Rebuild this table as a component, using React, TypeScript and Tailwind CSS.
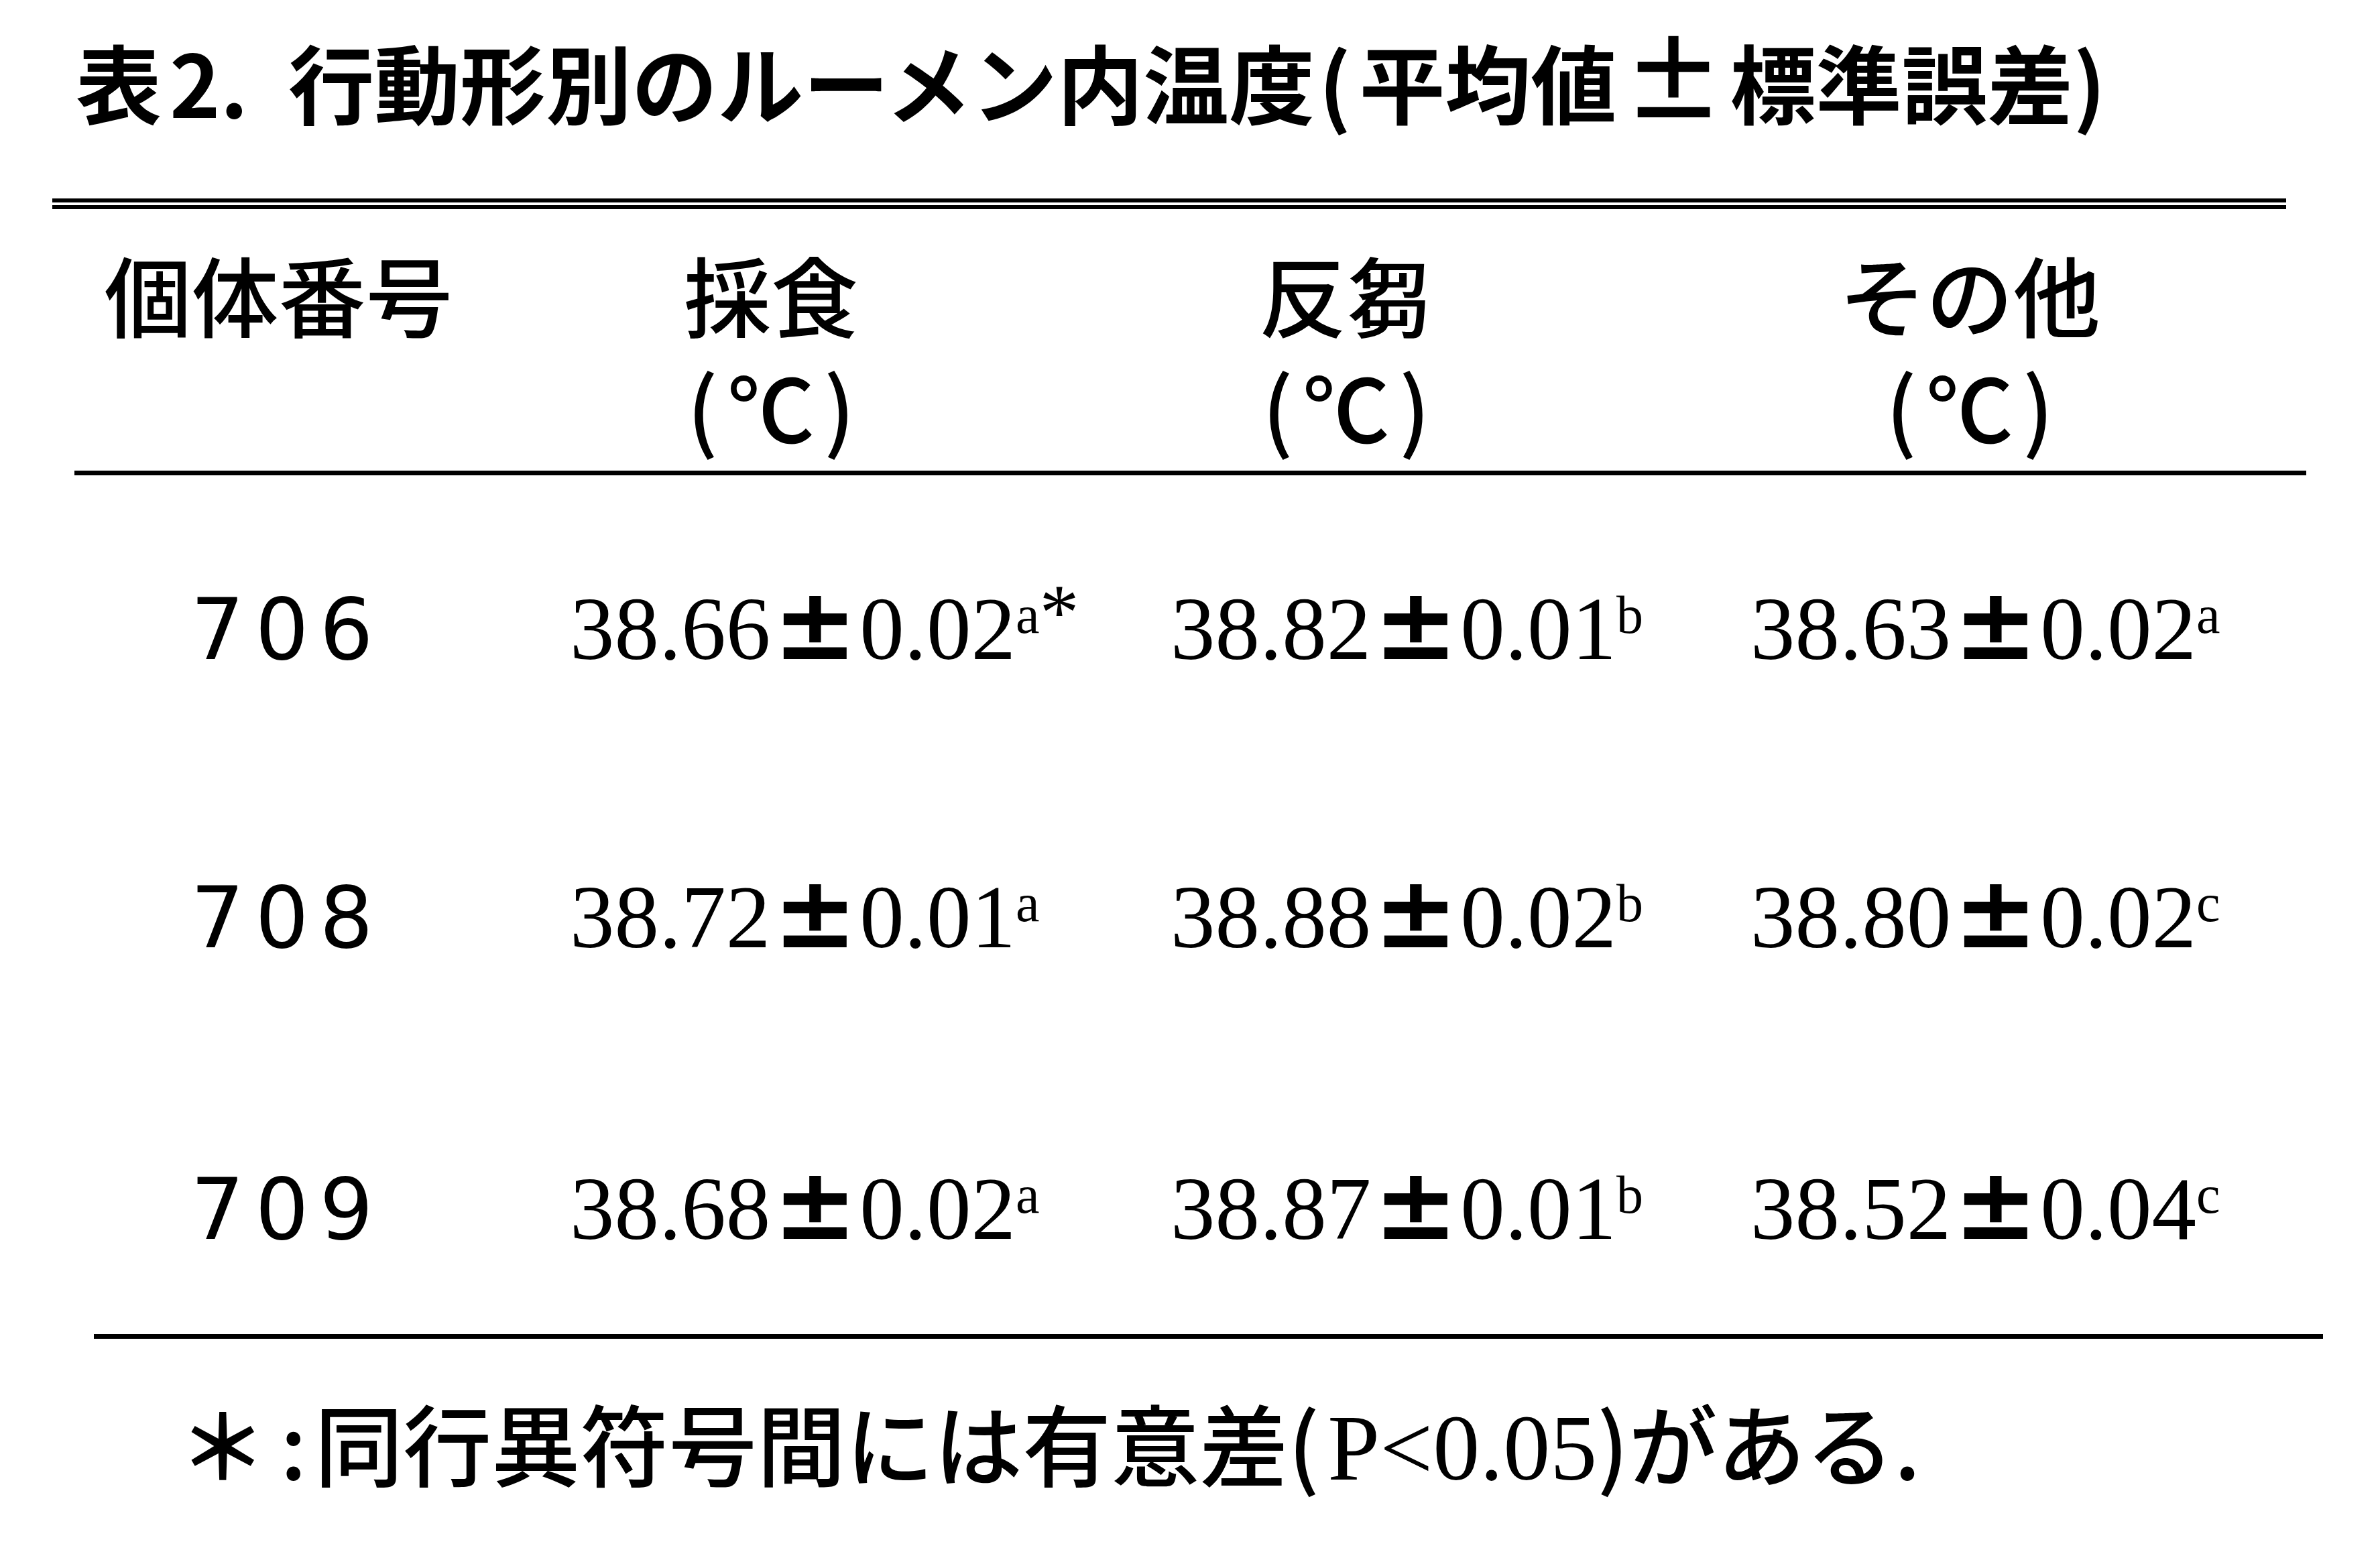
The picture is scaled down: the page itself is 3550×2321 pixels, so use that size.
const jp = "font-['Noto_Sans_CJK_JP',sans-serif]";
const serif = "font-['Liberation_Serif','Times_New_Roman',serif]";

interface Cell {
  mean: string;
  se: string;
  sup: string;
  star?: boolean;
}

interface Row {
  id: string;
  cells: Cell[];
  gap: string;
}

const ROWS: Row[] = [
  {
    id: '706',
    gap: 'mt-[163px]',
    cells: [
      { mean: '38.66', se: '0.02', sup: 'a', star: true },
      { mean: '38.82', se: '0.01', sup: 'b' },
      { mean: '38.63', se: '0.02', sup: 'a' },
    ],
  },
  {
    id: '708',
    gap: 'mt-[297px]',
    cells: [
      { mean: '38.72', se: '0.01', sup: 'a' },
      { mean: '38.88', se: '0.02', sup: 'b' },
      { mean: '38.80', se: '0.02', sup: 'c' },
    ],
  },
  {
    id: '709',
    gap: 'mt-[302px]',
    cells: [
      { mean: '38.68', se: '0.02', sup: 'a' },
      { mean: '38.87', se: '0.01', sup: 'b' },
      { mean: '38.52', se: '0.04', sup: 'c' },
    ],
  },
];

const HEADERS = ['採食', '反芻', 'その他'];
const PADS = ['pl-[130px]', 'pl-[166px]', 'pl-[175px]'];

function Value({ cell, pad }: { cell: Cell; pad: string }) {
  return (
    <div className={`${serif} ${pad} text-[133px] leading-none whitespace-nowrap`}>
      {cell.mean}
      <span className="inline-block w-[133px] text-center font-['DejaVu_Sans',sans-serif] text-[150px] font-bold leading-[0]">
        ±
      </span>
      {cell.se}
      <span className="relative -top-[39px] text-[80px] leading-none">{cell.sup}</span>
      {cell.star && <span className="relative -top-[30px] text-[118px] leading-[0]">*</span>}
    </div>
  );
}

export default function App() {
  return (
    <div className="h-[2321px] w-full overflow-hidden bg-white text-black">
      {/* title */}
      <h1 className={`${jp} ml-[113px] pt-[57px] text-[128px] font-bold leading-none whitespace-nowrap`}>
        表<span className="ml-[12px]">2.</span>
        <span className="ml-[60px]">
          行動形別のルーメン内温度
          <span className="ml-[6px] mr-[12px]">(</span>
          平均値
          <span className="inline-block w-[169px] text-center text-[150px] leading-[0]">±</span>
          標準誤差)
        </span>
      </h1>

      {/* double rule */}
      <div className="ml-[78px] mt-[111px] w-[3332px]">
        <div className="h-[6px] bg-black" />
        <div className="mt-[4px] h-[6px] bg-black" />
      </div>

      {/* header */}
      <div className={`${jp} ml-[111px] mt-[59px] grid grid-cols-[609px_860px_856px_1004px] text-[130px] font-medium`}>
        <div className="h-[130px] text-center leading-[130px]">個体番号</div>
        {HEADERS.map((h) => (
          <div key={h} className="flex flex-col items-center gap-[37px]">
            <div className="h-[130px] leading-[130px]">{h}</div>
            <div className="h-[130px] leading-[130px]">
              (<span className="mx-[14px]">℃</span>)
            </div>
          </div>
        ))}
      </div>

      <div className="ml-[111px] mt-[34px] h-[7px] w-[3329px] bg-black" />

      {/* body */}
      {ROWS.map((row) => (
        <div
          key={row.id}
          className={`${row.gap} ml-[111px] grid h-[133px] grid-cols-[609px_860px_856px_1004px] items-baseline`}
        >
          <div className="pl-[26px] text-center font-['DejaVu_Sans',sans-serif] text-[126px] leading-none tracking-[16px]">
            {row.id}
          </div>
          {row.cells.map((c, i) => (
            <Value key={i} cell={c} pad={PADS[i]} />
          ))}
        </div>
      ))}

      <div className="ml-[140px] mt-[120px] h-[7px] w-[3325px] bg-black" />

      {/* footnote */}
      <p className={`${jp} ml-[266px] mt-[87px] text-[132px] font-medium leading-none whitespace-nowrap`}>
        <span className="font-bold">＊</span>
        <span className="ml-[20px] mr-[12px]">:</span>
        同行異符号間には有意差(<span className={`${serif} ml-[12px] text-[140px]`}>P&lt;0.05</span>)がある.
      </p>
    </div>
  );
}
